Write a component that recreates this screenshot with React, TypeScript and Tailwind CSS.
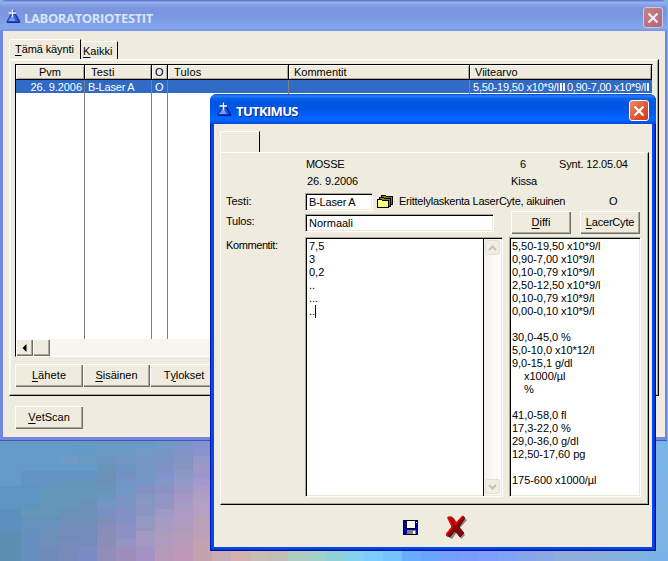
import React from "react";

const backdrop: string[][] = [
  ["#659bc7", "#659bc7", "#659bc8", "#659bc8", "#639bc5", "#699bc5", "#6a9bc7", "#699aca", "#739ac4", "#7a95ca", "#8493d0"],
  ["#659bc7", "#659bc7", "#659bc8", "#659bc8", "#639bc5", "#699bc5", "#6a9bc7", "#739ac4", "#7596c6", "#8194c5", "#8b92d0"],
  ["#659bc7", "#659bc7", "#659bc8", "#6e9bc3", "#6b9ac0", "#6b95c5", "#7494c5", "#7497c5", "#7b94c5", "#8195c5", "#9399c4"],
  ["#659bc7", "#659bc7", "#659bc8", "#659bc8", "#659bc8", "#6996b8", "#6a95c3", "#7497c5", "#7b94c5", "#8b93c5", "#9d98c5"],
  ["#659bc7", "#6594c4", "#6594c4", "#6594c4", "#6594c4", "#6d90b9", "#7590c5", "#7497c5", "#8292cf", "#8b99c4", "#9a98ca"],
  ["#659bc7", "#6594c4", "#6594c4", "#6397b8", "#6397b8", "#6d90b9", "#7296c5", "#7497c5", "#8298c5", "#9399cb", "#a598cf"],
  ["#5c96c0", "#5c96c0", "#6597b8", "#6597b8", "#6597b8", "#6996b8", "#7296c5", "#8490c5", "#8a92c5", "#9c96c5", "#ad9bc5"],
  ["#5c96c0", "#5c96c0", "#6597b8", "#6597b8", "#6996b8", "#6a96c5", "#7b95c3", "#8497c4", "#9396c5", "#a696c3", "#ad9fc3"],
  ["#5c96c0", "#5c96c0", "#6597b8", "#6597b8", "#6992b8", "#7296c5", "#7b95c3", "#8b96c3", "#9396c5", "#a69bc3", "#b5a0c3"],
  ["#5b90bd", "#6597b8", "#6597b8", "#6992b8", "#6d90b9", "#7990c5", "#8490c5", "#8b96c3", "#9e9ac5", "#ae98c5", "#b5a0c3"],
  ["#5b90bd", "#6591bd", "#6591bd", "#6f8fb9", "#6f8fb9", "#7a90b9", "#8490c5", "#9399c3", "#a59bc3", "#ae9bc4", "#b6a3b8"],
  ["#5b90bd", "#6591bd", "#6591bd", "#738bb9", "#738bb9", "#888cb9", "#8d90c5", "#9696c3", "#a59bc3", "#ae9bb9", "#bda0b8"],
  ["#5b8eb0", "#6590bd", "#6d90b9", "#738bb9", "#738bb9", "#8a8db8", "#8d90c5", "#a29ac3", "#ae9bb9", "#b69bb8", "#bda0b8"],
  ["#5b8eb0", "#6590bd", "#6d90b9", "#788cb9", "#738bb9", "#8a8db8", "#9396c5", "#a29ac3", "#ad9bc3", "#b69bb8", "#c5a2b0"],
  ["#5b8eb0", "#6590bd", "#718bb9", "#788cb9", "#7b8bc4", "#928cb9", "#9d8fb9", "#a592c4", "#b698b8", "#bf98b8", "#c5a2b0"],
  ["#5b8eb0", "#6590bd", "#718bb9", "#788cb9", "#7b8bc4", "#928cb9", "#9d8fb9", "#a592c4", "#b698b8", "#bf98b8", "#c5a2b0"],
];

const strip = [
  "#c6adb5", "#d1b0af", "#c6bdb3", "#c0bdb5", "#adcdbf", "#a3d1c9", "#8fd1d8", "#84d0ef", "#78ceff", "#73c5ff", "#68adff", "#69a5ff",
  "#739cff", "#7b9cff", "#7e9eff", "#7fa4f5", "#85a6eb", "#88a8e4", "#8cacd9", "#8cacd9", "#87afd8", "#84b0dc", "#7eb3e1", "#79b2e8",
];

const bevel = "shadow-[inset_1px_1px_#fff,inset_-1px_-1px_#716f64,inset_-2px_-2px_#aca899]";
const field = "bg-white border border-t-[#aca899] border-l-[#aca899] border-r-white border-b-white shadow-[inset_1px_1px_#000,inset_-1px_-1px_#ece9d8]";

function Logo({ faded }: { faded?: boolean }) {
  return (
    <svg width="15" height="15" viewBox="0 0 15 15" className={faded ? "opacity-85" : ""}>
      <path d="M8 1.5L14.5 13L13.5 14H1L0.5 12.5L6.5 2Z" fill="#061c94" />
      <path d="M7 2L12.5 12.5H1.2Z" fill="#2456dc" />
      <path d="M6.5 6L9.5 12H2.2Z" fill="#6f9cf4" />
      <path d="M6.5 0.5V8M2.5 4H10" stroke="#fff" strokeWidth="1.3" />
    </svg>
  );
}

function Close({ faded }: { faded?: boolean }) {
  return (
    <div className={`flex h-[21px] w-5 items-center justify-center rounded-[3px] border ${faded ? "border-[#c5c9ee] bg-linear-to-br from-[#c9838c] to-[#af6476]" : "border-white bg-linear-to-br from-[#ee8b6b] via-[#e25a38] to-[#c83a12]"}`}>
      <svg width="12" height="12" viewBox="0 0 12 12">
        <path d="M1.5 1.5L10.5 10.5M10.5 1.5L1.5 10.5" stroke={faded ? "#f4eff8" : "#fff"} strokeWidth="2.2" />
      </svg>
    </div>
  );
}

function Button({ hot, rest, before = "", className = "" }: { hot: string; rest: string; before?: string; className?: string }) {
  return (
    <div className={`flex h-[23px] shrink-0 items-center justify-center bg-[#efebde] pb-px ${bevel} ${className}`}>
      {before}<span className="underline underline-offset-2">{hot}</span>{rest}
    </div>
  );
}

function HeaderCell({ children, className }: { children: string; className: string }) {
  return (
    <div className={`h-[14px] shrink-0 border-r border-black leading-[14px] shadow-[inset_1px_1px_#fff,inset_-1px_-1px_#aca899] ${className}`}>
      {children}
    </div>
  );
}

function ArrowButton({ down }: { down?: boolean }) {
  return (
    <div className="flex h-[15px] w-[15px] items-center justify-center rounded-[2px] border border-[#e4e1d4] bg-[#f0eee4]">
      <svg width="9" height="6" viewBox="0 0 9 6">
        <path d={down ? "M1 1L4.5 4.5L8 1" : "M1 5L4.5 1.5L8 5"} fill="none" stroke="#c5c2b5" strokeWidth="2" />
      </svg>
    </div>
  );
}

function ColumnRules() {
  return (
    <div className="flex grow">
      <div className="w-[69px] shrink-0 border-r border-[#808080]" />
      <div className="w-[67px] shrink-0 border-r border-[#808080]" />
      <div className="w-4 shrink-0 border-r border-[#808080]" />
      <div className="w-[121px] shrink-0 border-r border-[#808080]" />
      <div className="w-[181px] shrink-0 border-r border-[#808080]" />
    </div>
  );
}

function TestsWindow() {
  return (
    <div className="absolute top-0 left-0 flex h-[441px] w-[667px] flex-col overflow-hidden rounded-t-[6px] border-b border-[#4d4ebd] bg-[#7288df]">
      <div className="flex h-[31px] shrink-0 items-start bg-[linear-gradient(#657cd7_0,#657cd7_1px,#9bb5ee_2px,#8ba8e8_4px,#7b96df_8px,#7b94df_14px,#80a0e6_23px,#84a8ee_28px,#7693e3_31px)] pt-[7px] pr-1 pl-[6px]">
        <div className="pt-[2px]"><Logo faded /></div>
        <div className="grow pt-[3px] pl-[3px] font-['Open_Sans','Noto_Sans',sans-serif] text-[13px] leading-[16px] font-bold tracking-[-0.38px] text-[#d8e4f8]">LABORATORIOTESTIT</div>
        <Close faded />
      </div>
      <div className="mr-[2px] ml-[3px] flex h-[406px] flex-col bg-[#efebde] pt-2 pl-[6px]">
        <div className="flex h-[20px] shrink-0 items-end">
          <div className="h-[20px] w-[72px] rounded-tl-[2px] border-t border-r border-l border-t-white border-r-black border-l-white pt-[3px] pl-[5px] leading-[13px] tracking-[-0.1px] whitespace-nowrap">
            <span className="underline underline-offset-2">T</span>ämä käynti
          </div>
          <div className="h-[18px] w-[37px] border-t border-r border-t-white border-r-black pt-[3px] pl-[2px] leading-[13px]">
            <span className="underline underline-offset-2">K</span>aikki
          </div>
        </div>
        <div className="flex h-[337px] w-[650px] shrink-0 flex-col border-t border-r border-b border-l border-t-white border-r-black border-b-black border-l-white pt-1 pl-[5px] shadow-[inset_-1px_-1px_#aca899,inset_1px_1px_#f8f6ef]">
          <div className="flex h-[293px] w-[638px] flex-col border border-t-black border-r-[#efebde] border-b-white border-l-black bg-white">
            <div className="flex h-[15px] shrink-0 border-b border-black bg-[#efebde]">
              <HeaderCell className="w-[69px] pl-[23px]">Pvm</HeaderCell>
              <HeaderCell className="w-[67px] pl-[6px] tracking-[0.2px]">Testi</HeaderCell>
              <HeaderCell className="w-4 pl-[3px]">O</HeaderCell>
              <HeaderCell className="w-[121px] pl-[6px] tracking-[0.2px]">Tulos</HeaderCell>
              <HeaderCell className="w-[181px] pl-[5px]">Kommentit</HeaderCell>
              <HeaderCell className="w-[182px] pl-[5px]">Viitearvo</HeaderCell>
            </div>
            <div className="flex h-[13px] shrink-0 bg-[#316ac5] leading-[14px] whitespace-nowrap text-white">
              <div className="w-[69px] shrink-0 border-r border-[#808080] pr-[2px] text-right tracking-[-0.05px]">26. 9.2006</div>
              <div className="w-[67px] shrink-0 border-r border-[#808080] pl-[3px] tracking-[-0.2px]">B-Laser A</div>
              <div className="w-4 shrink-0 border-r border-[#808080] pl-[3px]">O</div>
              <div className="w-[121px] shrink-0 border-r border-[#808080]" />
              <div className="w-[181px] shrink-0 border-r border-[#808080]" />
              <div className="flex grow items-center pl-[3px] tracking-[-0.2px]">
                <span className="w-[87px]">5,50-19,50 x10*9/l</span>
                <i className="mt-px h-2 w-[2px] bg-white" /><i className="mt-px mr-[2px] ml-px h-2 w-[2px] bg-white" />
                <span className="tracking-[-0.25px]">0,90-7,00 x10*9/l</span>
                <i className="mt-px ml-px h-2 w-[2px] bg-white" />
              </div>
            </div>
            <ColumnRules />
            <div className="flex h-[17px] shrink-0 bg-[#f7f5ee]">
              <div className={`flex w-[17px] items-center justify-center bg-[#efebde] ${bevel}`}>
                <svg width="5" height="8" viewBox="0 0 5 8"><path d="M4.5 0V8L0.5 4Z" fill="#000" /></svg>
              </div>
              <div className={`w-[17px] bg-[#efebde] ${bevel}`} />
            </div>
          </div>
          <div className="flex pt-[7px]">
            <Button hot="L" rest="ähete" className="w-[68px] tracking-[0.1px]" />
            <Button hot="S" rest="isäinen" className="w-[67px] tracking-[0px]" />
            <Button before="T" hot="y" rest="lokset" className="w-[68px] tracking-[-0.05px]" />
          </div>
        </div>
        <Button hot="V" rest="etScan" className="mt-[10px] ml-[6px] w-[68px] tracking-[0px]" />
      </div>
    </div>
  );
}

const references = [
  "5,50-19,50 x10*9/l", "0,90-7,00 x10*9/l", "0,10-0,79 x10*9/l", "2,50-12,50 x10*9/l", "0,10-0,79 x10*9/l", "0,00-0,10 x10*9/l", "",
  "30,0-45,0 %", "5,0-10,0 x10*12/l", "9,0-15,1 g/dl", "    x1000/µl", "    %", "",
  "41,0-58,0 fl", "17,3-22,0 %", "29,0-36,0 g/dl", "12,50-17,60 pg", "", "175-600 x1000/µl",
];

function Folders() {
  return (
    <svg width="17" height="14" viewBox="0 0 17 14" shapeRendering="crispEdges">
      <path d="M5 3V1H9L10 2H16V10H14V12H12" fill="#808000" stroke="#000" />
      <path d="M3 5V3H7L8 4H14V12H12" fill="#808000" stroke="#000" />
      <path d="M1 13V6L2 5H5L6 6H12V13Z" fill="#ffff70" stroke="#000" />
      <path d="M2 7H11" stroke="#ffffc8" />
    </svg>
  );
}

function Disk() {
  return (
    <svg width="15" height="15" viewBox="0 0 15 15" shapeRendering="crispEdges">
      <rect width="15" height="15" fill="#000" />
      <rect x="1" y="1" width="13" height="13" fill="#0000b8" />
      <rect x="3" y="1" width="10" height="8" fill="#000" />
      <rect x="4" y="1" width="8" height="7" fill="#fff" />
      <rect x="13" y="2" width="1" height="1" fill="#fff" />
      <rect x="4" y="10" width="9" height="4" fill="#808080" />
      <rect x="10" y="11" width="2" height="3" fill="#fff" />
    </svg>
  );
}

function RedCross() {
  return (
    <svg width="22" height="25" viewBox="0 0 22 25">
      <path d="M4 3L8 3L12 9L18 3L21 5L14 13L19 20L15 24L11 17L6 24L3 22L8 13Z" fill="#848484" />
      <path d="M2 2L6 2L10 8L17 1L19 3L13 12L18 18L14 22L9 16L4 22L1 21L1 19L6 12Z" fill="#8b0000" stroke="#300" strokeWidth="0.7" />
      <path d="M1.5 2.5H5L9.5 9L17 1M6.5 12L1 18.5V21M2 3L6.5 11" fill="none" stroke="#f00000" strokeWidth="1.7" />
    </svg>
  );
}

function StudyDialog() {
  return (
    <div className="absolute top-[94px] left-[210px] flex h-[457px] w-[446px] flex-col overflow-hidden rounded-t-[7px] bg-[#0549e8] shadow-[inset_1px_0_#0019b8,inset_-1px_-1px_#00138c,inset_-2px_-2px_#0831d9]">
      <div className="flex h-[30px] shrink-0 items-start bg-[linear-gradient(#0848c8_0,#2a82f5_2px,#0864ee_4px,#0055e5_8px,#0054e3_14px,#0061fb_22px,#0366ff_26px,#0248d8_30px)] pt-[6px] pr-[7px] pl-[7px]">
        <div className="pt-[2px]"><Logo /></div>
        <div className="grow pt-[3px] pl-[4px] font-['Open_Sans','Noto_Sans',sans-serif] text-[13px] leading-[16px] font-bold tracking-[-0.65px] text-white [text-shadow:1px_1px_#0b2a8a]">TUTKIMUS</div>
        <Close />
      </div>
      <div className="mr-[4px] ml-[4px] flex h-[423px] flex-col bg-[#efebde] pt-[7px] pl-[6px]">
        <div className="h-[21px] w-[40px] shrink-0 rounded-tl-[2px] border-t border-r border-l border-t-white border-r-black border-l-white" />
        <div className="flex h-[353px] w-[429px] shrink-0 flex-col border-t border-r border-b border-l border-t-white border-r-black border-b-black border-l-white pl-[5px] shadow-[inset_-1px_-1px_#aca899]">
          <div className="mt-[5px] flex h-[17px] shrink-0 leading-[13px]">
            <div className="w-[213px] pl-20 tracking-[-0.3px]">MOSSE</div>
            <div className="w-[120px] pl-[81px]">6</div>
            <div className="w-[80px] tracking-[-0.15px] whitespace-nowrap">Synt. 12.05.04</div>
          </div>
          <div className="flex h-[18px] shrink-0 leading-[13px]">
            <div className="w-[285px] pl-[81px] tracking-[-0.1px]">26. 9.2006</div>
            <div className="tracking-[-0.2px]">Kissa</div>
          </div>
          <div className="flex h-[20px] shrink-0 leading-[13px]">
            <div className="w-[79px] pt-[2px]">Testi:</div>
            <div className={`h-[18px] w-[68px] pt-[2px] pl-[3px] tracking-[-0.2px] ${field}`}>B-Laser A</div>
            <div className="pt-px pl-[3px]"><Folders /></div>
            <div className="w-[216px] pt-[2px] pl-[6px] tracking-[-0.24px] whitespace-nowrap">Erittelylaskenta LaserCyte, aikuinen</div>
            <div className="pt-[2px]">O</div>
          </div>
          <div className="flex h-[24px] shrink-0 leading-[13px]">
            <div className="w-[79px] pt-[2px] tracking-[-0.2px]">Tulos:</div>
            <div className={`mt-px h-[18px] w-[189px] pt-[2px] pl-[3px] ${field}`}>Normaali</div>
            <Button hot="D" rest="iffi" className="-mt-[2px] ml-[17px] w-[60px]" />
            <Button hot="L" rest="acerCyte" className="-mt-[2px] ml-[9px] w-[60px] tracking-[-0.2px]" />
          </div>
          <div className="flex h-[261px] shrink-0 leading-[13px]">
            <div className="w-[79px] pt-[2px] tracking-[-0.4px]">Kommentit:</div>
            <div className={`flex h-[260px] w-[198px] ${field}`}>
              <div className="w-[178px] border-r border-black pt-[2px] pl-[3px]">
                <div>7,5</div><div>3</div><div>0,2</div><div>..</div><div>...</div>
                <div className="flex">..<i className="h-[13px] w-px bg-black" /></div>
              </div>
              <div className="my-px flex w-[17px] flex-col items-center justify-between bg-linear-to-r from-[#f4f1ec] to-[#fefefb] py-px">
                <ArrowButton />
                <ArrowButton down />
              </div>
            </div>
            <div className={`ml-[6px] h-[260px] w-[132px] pt-[2px] pl-[2px] tracking-[-0.05px] whitespace-pre ${field}`}>
              {references.map((line, i) => <div key={i} className="h-[13px]">{line}</div>)}
            </div>
          </div>
        </div>
        <div className="flex pt-[10px] pl-[183px]">
          <div className="pt-[5px]"><Disk /></div>
          <div className="pl-[28px]"><RedCross /></div>
        </div>
      </div>
    </div>
  );
}

export default function App() {
  return (
    <div className="relative h-[561px] w-[668px] overflow-hidden bg-[#7cb5ef] font-['Liberation_Sans',Arial,sans-serif] text-[11px] text-black">
      <div className="flex h-[561px] flex-col justify-end bg-linear-to-b from-[#7bb8d8] via-[#7bb8f2] to-[#7bb2e0]">
        <div className="flex h-[120px] w-[212px] flex-col">
          {backdrop.map((row, y) => (
            <div key={y} className="flex grow basis-0">
              {row.map((color, x) => <div key={x} className={x === 0 ? "w-[21px]" : "w-[19.1px]"} style={{ backgroundColor: color }} />)}
            </div>
          ))}
        </div>
        <div className="-mt-[11px] ml-[212px] flex h-[11px]">
          {strip.map((color, i) => <div key={i} className="w-[19px] shrink-0" style={{ backgroundColor: color }} />)}
        </div>
      </div>
      <TestsWindow />
      <StudyDialog />
    </div>
  );
}
